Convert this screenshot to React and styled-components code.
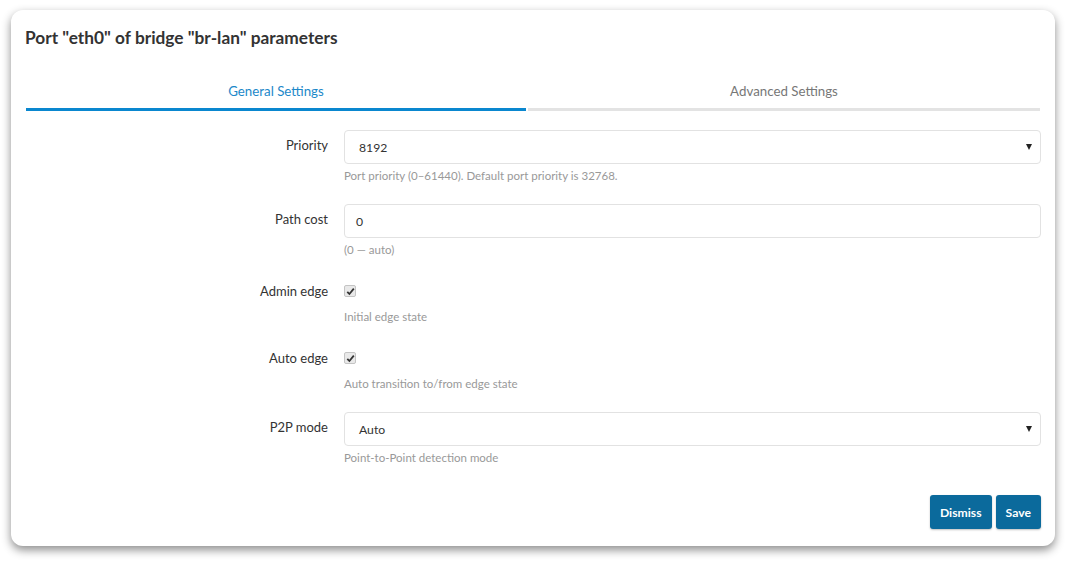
import React, { useState } from "react";
import styled, { createGlobalStyle } from "styled-components";

const fields = [
	{ id: "priority", label: "Priority", kind: "select", value: "8192", help: "Port priority (0–61440). Default port priority is 32768." },
	{ id: "cost", label: "Path cost", kind: "input", value: "0", help: "(0 — auto)" },
	{ id: "admin", label: "Admin edge", kind: "check", value: true, help: "Initial edge state" },
	{ id: "auto", label: "Auto edge", kind: "check", value: true, help: "Auto transition to/from edge state" },
	{ id: "p2p", label: "P2P mode", kind: "select", value: "Auto", help: "Point-to-Point detection mode" },
];

function App() {
	const [tab, setTab] = useState(0);

	return (
		<>
			<GlobalStyle />
			<Page>
				<Card>
					<Title>Port "eth0" of bridge "br-lan" parameters</Title>
					<Tabs>
						<Tab active={tab === 0} onClick={() => setTab(0)}>
							General Settings
						</Tab>
						<Tab active={tab === 1} onClick={() => setTab(1)}>
							Advanced Settings
						</Tab>
					</Tabs>
					<Form>
						{fields.map((f) => (
							<Row key={f.id}>
								<Label check={f.kind === "check"}>{f.label}</Label>
								<Field>
									{f.kind === "check" ? (
										<CheckWrap>
											<Check>
												{f.value && (
													<svg width="9" height="9" viewBox="0 0 9 9">
														<path
															d="M1.3 4.8 L3.4 7 L7.8 1.6"
															fill="none"
															stroke="#333"
															strokeWidth="1.8"
														/>
													</svg>
												)}
											</Check>
										</CheckWrap>
									) : (
										<Box select={f.kind === "select"}>
											<span>{f.value}</span>
											{f.kind === "select" && <Caret />}
										</Box>
									)}
									<Help check={f.kind === "check"}>{f.help}</Help>
								</Field>
							</Row>
						))}
					</Form>
					<Footer>
						<Button>Dismiss</Button>
						<Button>Save</Button>
					</Footer>
				</Card>
			</Page>
		</>
	);
}

export default App;

const GlobalStyle = createGlobalStyle`
	body {
		margin: 0;
		background: #fff;
		font-family: Lato, "Open Sans", sans-serif;
	}
`;
const Page = styled.div`
	padding: 10px 14px 15px 11px;
`;
const Card = styled.div`
	background: #fff;
	border-radius: 12px;
	box-shadow: 0 4px 10px rgba(0, 0, 0, 0.45);
	padding: 18px 14px 17px 14px;
	box-sizing: border-box;
	height: 536px;
`;
const Title = styled.h3`
	margin: 0;
	font-size: 17.3px;
	line-height: 20px;
	font-weight: 700;
	color: #333;
`;
const Tabs = styled.div`
	display: grid;
	grid-template-columns: 500fr 512fr;
	column-gap: 2px;
	margin: 34px 1px 0 1px;
`;
const Tab = styled.div`
	text-align: center;
	font-size: 13.3px;
	line-height: 18px;
	padding-bottom: 8px;
	color: ${(p) => (p.active ? "#1c88c9" : "#777")};
	border-bottom: 3px solid ${(p) => (p.active ? "#0a87cf" : "#e3e3e3")};
	cursor: pointer;
`;
const Form = styled.div`
	display: flex;
	flex-direction: column;
	gap: 20px;
	margin: 19px 0 0 1px;
`;
const Row = styled.div`
	display: grid;
	grid-template-columns: 302px 1fr;
	column-gap: 16px;
`;
const Label = styled.div`
	height: ${(p) => (p.check ? "26px" : "30px")};
	display: flex;
	align-items: center;
	justify-content: flex-end;
	font-size: 13px;
	color: #333;
`;
const Field = styled.div`
	display: flex;
	flex-direction: column;
`;
const Box = styled.div`
	height: 34px;
	box-sizing: border-box;
	border: 1px solid #e2e2e2;
	border-radius: 4px;
	display: flex;
	align-items: center;
	justify-content: space-between;
	padding: 0 8px 0 ${(p) => (p.select ? "14px" : "11px")};
	font-size: 12.2px;
	color: #333;
`;
const Caret = styled.span`
	width: 0;
	height: 0;
	border-left: 3px solid transparent;
	border-right: 3px solid transparent;
	border-top: 6px solid #222;
`;
const CheckWrap = styled.div`
	height: 28px;
	display: flex;
	align-items: center;
`;
const Check = styled.span`
	width: 12px;
	height: 12px;
	box-sizing: border-box;
	border: 1px solid #c4c4c4;
	border-radius: 2px;
	background: #e9e9e9;
	display: flex;
	align-items: center;
	justify-content: center;
	margin-top: -2px;
`;
const Help = styled.div`
	margin-top: ${(p) => (p.check ? "3px" : "4px")};
	font-size: 11.5px;
	line-height: 16px;
	color: #999;
`;
const Footer = styled.div`
	display: flex;
	justify-content: flex-end;
	gap: 4px;
	margin-top: 29px;
`;
const Button = styled.button`
	height: 34px;
	padding: 0 10px;
	border: none;
	border-radius: 3px;
	background: #0b6a9c;
	color: #fff;
	font-family: Lato, sans-serif;
	font-weight: 700;
	font-size: 12.2px;
	box-shadow: 0 1px 2px rgba(0, 0, 0, 0.25);
	cursor: pointer;
`;
